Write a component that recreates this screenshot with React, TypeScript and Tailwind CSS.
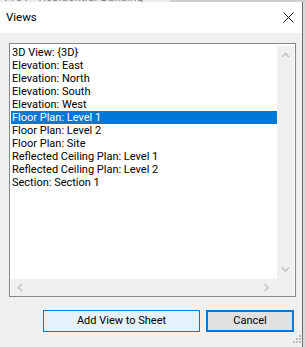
import React from "react";

const items = [
  "3D View: {3D}",
  "Elevation: East",
  "Elevation: North",
  "Elevation: South",
  "Elevation: West",
  "Floor Plan: Level 1",
  "Floor Plan: Level 2",
  "Floor Plan: Site",
  "Reflected Ceiling Plan: Level 1",
  "Reflected Ceiling Plan: Level 2",
  "Section: Section 1",
];

const Chevron = ({ dir }: { dir: "up" | "down" | "left" | "right" }) => {
  const pts: Record<string, string> = {
    up: "1,5 4.5,1.5 8,5",
    down: "1,1.5 4.5,5 8,1.5",
    left: "5,1 1.5,4.5 5,8",
    right: "1.5,1 5,4.5 1.5,8",
  };
  const vertical = dir === "up" || dir === "down";
  return (
    <svg
      width={vertical ? 9 : 7}
      height={vertical ? 7 : 9}
      viewBox={vertical ? "0 0 9 7" : "0 0 7 9"}
    >
      <polyline points={pts[dir]} fill="none" stroke="#c4c4c4" strokeWidth="1.6" />
    </svg>
  );
};

export default function App() {
  return (
    <div
      className="w-[305px] h-[347px] bg-[#d9d9d9] overflow-hidden flex flex-col"
      style={{ fontFamily: "Roboto, 'Liberation Sans', sans-serif" }}
    >
      {/* strip of window behind */}
      <div className="h-[2px] flex overflow-hidden">
        <div className="w-[170px] bg-[#ececec] relative overflow-hidden">
          <div className="absolute left-[2px] bottom-[-1px] text-[12px] leading-[12px] text-[#8a8a8a] whitespace-nowrap">
            1101 - Residential Building &nbsp;✕
          </div>
        </div>
        <div className="flex-1 bg-[#cfcfcf]" />
      </div>

      <div className="relative w-[303px] flex-1 bg-[#f0f0f0] border-r border-[#6e6e6e] flex flex-col">
        {/* title bar */}
        <div className="h-[31px] bg-white flex items-center justify-between pl-[6px] pr-[8px]">
          <span className="text-[11.5px] text-black">Views</span>
          <svg width="11" height="11" viewBox="0 0 11 11">
            <path d="M0.5 0.5 L10.5 10.5 M10.5 0.5 L0.5 10.5" stroke="#111" strokeWidth="1" />
          </svg>
        </div>

        {/* list box */}
        <div className="ml-[9px] mt-[10px] w-[287px] h-[254px] border border-[#828790] bg-white pt-[2px] px-[1px] flex flex-col">
          <div className="flex flex-1 min-h-0">
            <div className="flex-1 flex flex-col text-[11px] text-black">
              {items.map((t) => {
                const sel = t === "Floor Plan: Level 1";
                return (
                  <div
                    key={t}
                    className={
                      "h-[13px] leading-[13px] pl-[1px] whitespace-nowrap " +
                      (sel ? "bg-[#0078d7] text-white" : "")
                    }
                  >
                    {t}
                  </div>
                );
              })}
            </div>
            <div className="w-[17px] bg-[#f0f0f0] flex flex-col items-center justify-between pt-[6px] pb-[6px]">
              <Chevron dir="up" />
              <Chevron dir="down" />
            </div>
          </div>
          <div className="h-[17px] flex">
            <div className="flex-1 bg-[#f0f0f0] flex items-center justify-between pl-[6px] pr-[7px]">
              <Chevron dir="left" />
              <Chevron dir="right" />
            </div>
            <div className="w-[17px] bg-[#f0f0f0]" />
          </div>
        </div>

        {/* buttons */}
        <div className="mt-[13px] flex pl-[43px] gap-[6px]">
          <button className="w-[157px] h-[22px] border border-[#0078d7] bg-[#e5f1fb] text-[11px] text-black flex items-center justify-center">
            Add View to Sheet
          </button>
          <button className="w-[88px] h-[22px] border-2 border-[#0078d7] bg-[#e1e1e1] text-[11px] text-black flex items-center justify-center">
            Cancel
          </button>
        </div>

        {/* resize grip */}
        <svg className="absolute right-[1px] bottom-[4px]" width="8" height="8" viewBox="0 0 8 8">
          <rect x="6" y="0" width="2" height="2" fill="#bdbdbd" />
          <rect x="3" y="3" width="2" height="2" fill="#bdbdbd" />
          <rect x="6" y="3" width="2" height="2" fill="#bdbdbd" />
          <rect x="0" y="6" width="2" height="2" fill="#bdbdbd" />
          <rect x="3" y="6" width="2" height="2" fill="#bdbdbd" />
          <rect x="6" y="6" width="2" height="2" fill="#bdbdbd" />
        </svg>
      </div>
    </div>
  );
}
